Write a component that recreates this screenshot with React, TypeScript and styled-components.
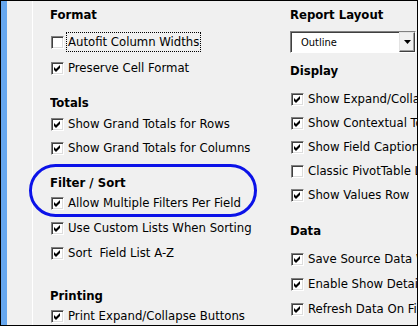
import React from "react";
import styled, { createGlobalStyle } from "styled-components";

const GlobalStyle = createGlobalStyle`
  html, body {
    margin: 0;
    padding: 0;
    background: #f0f0f0;
  }
  body {
    font-family: "DejaVu Sans Condensed", "DejaVu Sans", sans-serif;
  }
`;

const Frame = styled.div`
  position: relative;
  display: flex;
  width: 418px;
  height: 326px;
  box-sizing: border-box;
  border: 1px solid #000;
  background: #f0f0f0;
  overflow: hidden;
`;

const Strip = styled.div`
  flex: none;
  width: 6px;
  background: #66a7ef;
`;

const Gutter = styled.div`
  flex: none;
  width: 25px;
  border-right: 1px solid #fff;
`;

const Content = styled.div`
  display: flex;
  flex: 1;
  min-width: 0;
  padding-left: 17px;
`;

const Column = styled.div<{ $width?: number }>`
  display: flex;
  flex-direction: column;
  overflow: hidden;
  ${(p) => (p.$width ? `width: ${p.$width}px; flex: none;` : `flex: 1; min-width: 0;`)}
`;

const Heading = styled.div<{ $top: number; $after?: number }>`
  margin-top: ${(p) => p.$top}px;
  margin-bottom: ${(p) => p.$after ?? 0}px;
  height: 16px;
  line-height: 16px;
  font-size: 13px;
  font-weight: bold;
  color: #000;
  white-space: nowrap;
`;

const List = styled.div<{ $gap?: number }>`
  display: flex;
  flex-direction: column;
  gap: ${(p) => p.$gap ?? 0}px;
`;

const Row = styled.div`
  display: flex;
  align-items: center;
  height: 24px;
  padding-left: 1px;
  white-space: nowrap;
`;

const Box = styled.span`
  flex: none;
  display: flex;
  align-items: center;
  justify-content: center;
  width: 13px;
  height: 13px;
  box-sizing: border-box;
  background: #fff;
  border: 1px solid;
  border-color: #808080 #fff #fff #808080;
  box-shadow: inset 1px 1px 0 #404040, inset -1px -1px 0 #dcdcdc;
`;

const Caption = styled.span<{ $focused?: boolean }>`
  margin-left: 2px;
  padding: 0 1px;
  height: 20px;
  line-height: 18px;
  box-sizing: border-box;
  border: 1px ${(p) => (p.$focused ? "dotted #000" : "solid transparent")};
  font-size: 13px;
  color: #000;
  white-space: pre;
`;

const Select = styled.div`
  flex: none;
  display: flex;
  align-items: center;
  margin-top: 8px;
  width: 126px;
  height: 22px;
  box-sizing: border-box;
  background: #fff;
  border: 1px solid;
  border-color: #808080 #fff #fff #808080;
  box-shadow: inset 1px 1px 0 #404040;
  font-size: 11px;
  color: #000;
`;

const SelectValue = styled.span`
  flex: 1;
  padding-left: 10px;
`;

const DropButton = styled.span`
  flex: none;
  display: flex;
  align-items: center;
  justify-content: center;
  width: 16px;
  height: 20px;
  box-sizing: border-box;
  background: #f0f0f0;
  border: 1px solid;
  border-color: #e3e3e3 #404040 #404040 #e3e3e3;
  box-shadow: inset -1px -1px 0 #a0a0a0;
`;

const Callout = styled.div`
  position: absolute;
  left: 28px;
  top: 163px;
  width: 228px;
  height: 53px;
  box-sizing: border-box;
  border: 3px solid #0b12e8;
  border-radius: 27px;
  pointer-events: none;
`;

const Check = ({ on, label, focused }: { on?: boolean; label: string; focused?: boolean }) => (
  <Row>
    <Box>
      {on && (
        <svg width="7" height="7" viewBox="0 0 7 7">
          <polygon points="0,2 2,4 6,0 6,3 2,7 0,5" fill="#000" />
        </svg>
      )}
    </Box>
    <Caption $focused={focused}>{label}</Caption>
  </Row>
);

const App = () => (
  <>
    <GlobalStyle />
    <Frame>
      <Strip />
      <Gutter />
      <Content>
        <Column $width={240}>
          <Heading $top={6} $after={7}>Format</Heading>
          <List $gap={2}>
            <Check label="Autofit Column Widths" focused />
            <Check on label="Preserve Cell Format" />
          </List>

          <Heading $top={15} $after={1}>Totals</Heading>
          <List>
            <Check on label="Show Grand Totals for Rows" />
            <Check on label="Show Grand Totals for Columns" />
          </List>

          <Heading $top={15}>Filter / Sort</Heading>
          <List $gap={1}>
            <Check on label="Allow Multiple Filters Per Field" />
            <Check on label="Use Custom Lists When Sorting" />
            <Check on label="Sort  Field List A-Z" />
          </List>

          <Heading $top={23}>Printing</Heading>
          <List>
            <Check on label="Print Expand/Collapse Buttons" />
          </List>
        </Column>

        <Column>
          <Heading $top={6}>Report Layout</Heading>
          <Select>
            <SelectValue>Outline</SelectValue>
            <DropButton>
              <svg width="7" height="4" viewBox="0 0 7 4">
                <polygon points="0,0 7,0 3.5,4" fill="#000" />
              </svg>
            </DropButton>
          </Select>

          <Heading $top={10} $after={8}>Display</Heading>
          <List>
            <Check on label="Show Expand/Collapse Buttons" />
            <Check on label="Show Contextual Tooltips" />
            <Check on label="Show Field Captions and Filter Drop Downs" />
            <Check label="Classic PivotTable Layout" />
            <Check on label="Show Values Row" />
          </List>

          <Heading $top={16} $after={8}>Data</Heading>
          <List $gap={1}>
            <Check on label="Save Source Data With File" />
            <Check on label="Enable Show Details" />
            <Check on label="Refresh Data On File Open" />
          </List>
        </Column>
      </Content>
      <Callout />
    </Frame>
  </>
);

export default App;
